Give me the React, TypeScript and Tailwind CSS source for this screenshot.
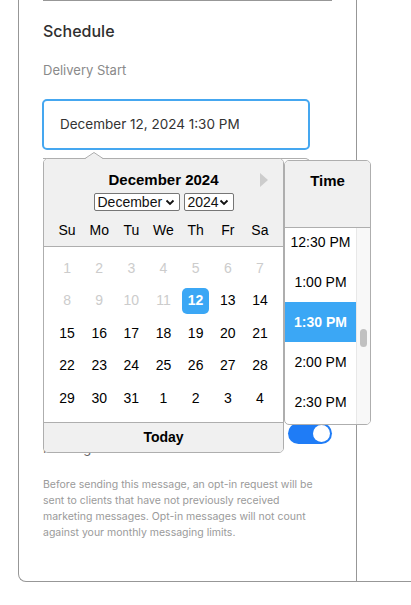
import React from 'react';

const font = { fontFamily: 'Inter, "Noto Sans", sans-serif' };
const calFont = { fontFamily: '"Liberation Sans", Arial, sans-serif' };

const dayNames = ['Su', 'Mo', 'Tu', 'We', 'Th', 'Fr', 'Sa'];

type Day = { n: number; muted?: boolean; selected?: boolean };

const weeks: Day[][] = [
  [1, 2, 3, 4, 5, 6, 7].map((n) => ({ n, muted: true })),
  [
    { n: 8, muted: true },
    { n: 9, muted: true },
    { n: 10, muted: true },
    { n: 11, muted: true },
    { n: 12, selected: true },
    { n: 13 },
    { n: 14 },
  ],
  [15, 16, 17, 18, 19, 20, 21].map((n) => ({ n })),
  [22, 23, 24, 25, 26, 27, 28].map((n) => ({ n })),
  [29, 30, 31, 1, 2, 3, 4].map((n) => ({ n })),
];

const times = ['12:30 PM', '1:00 PM', '1:30 PM', '2:00 PM', '2:30 PM', '3:00 PM'];

function Chevron() {
  return (
    <svg width="10" height="7" viewBox="0 0 10 7" className="shrink-0">
      <path d="M1.5 1.5 L5 5 L8.5 1.5" fill="none" stroke="#111" strokeWidth="1.8" />
    </svg>
  );
}

function FakeSelect({ label, width }: { label: string; width: string }) {
  return (
    <div
      className={`${width} h-[18px] border border-[#767676] rounded-[2px] bg-white flex items-center justify-between pl-[3px] pr-[4px] text-[14px] leading-none text-[#111]`}
    >
      <span>{label}</span>
      <Chevron />
    </div>
  );
}

function DatePanel() {
  return (
    <div className="w-[241px] border border-[#aeaeae] rounded-[5px] bg-white overflow-hidden relative">
      <div className="bg-[#f0f0f0] border-b border-[#aeaeae] pt-[12px] pb-[6px] relative">
        <div className="text-center text-[15px] leading-[18px] font-bold text-[#000]">December 2024</div>
        <svg width="8" height="14" viewBox="0 0 8 14" className="absolute left-[216px] top-[14px]">
          <path d="M0 0 L8 7 L0 14 Z" fill="#ccc" />
        </svg>
        <div className="flex justify-center gap-[4px] mt-[4px]">
          <FakeSelect label="December" width="w-[86px]" />
          <FakeSelect label="2024" width="w-[50px]" />
        </div>
        <div className="grid grid-cols-7 px-[7px] mt-[9px]">
          {dayNames.map((d) => (
            <div key={d} className="text-center text-[14px] leading-[20px] text-[#000]">
              {d}
            </div>
          ))}
        </div>
      </div>
      <div className="h-[175px] px-[7px] pt-[5px]">
        {weeks.map((w, i) => (
          <div key={i} className="grid grid-cols-7 h-[32.5px]">
            {w.map((d, j) => (
              <div key={j} className="flex items-center justify-center">
                {d.selected ? (
                  <div className="w-[27px] h-[26px] rounded-[5px] bg-[#3ba7f5] text-white font-bold text-[14px] flex items-center justify-center">
                    {d.n}
                  </div>
                ) : (
                  <span className={`text-[14px] ${d.muted ? 'text-[#ccc]' : 'text-[#000]'}`}>{d.n}</span>
                )}
              </div>
            ))}
          </div>
        ))}
      </div>
      <div className="h-[30px] bg-[#f0f0f0] border-t border-[#aeaeae] flex items-center justify-center text-[14px] font-bold text-[#000]">
        Today
      </div>
    </div>
  );
}

function TimePanel() {
  return (
    <div className="w-[87px] h-[265px] mt-[2px] border border-[#aeaeae] rounded-[5px] bg-white overflow-hidden flex flex-col">
      <div className="h-[67px] shrink-0 bg-[#f0f0f0] border-b border-[#aeaeae] pt-[11px] text-center text-[15px] leading-[18px] font-bold text-[#000]">
        Time
      </div>
      <div className="flex flex-1 overflow-hidden">
        <div className="w-[71px] overflow-hidden">
          <div className="-mt-[6px]">
            {times.map((t) => (
              <div
                key={t}
                className={`h-[40px] flex items-center justify-center text-[14px] ${
                  t === '1:30 PM' ? 'bg-[#3ba7f5] text-white font-bold' : 'text-[#000]'
                }`}
              >
                {t}
              </div>
            ))}
          </div>
        </div>
        <div className="flex-1 bg-[#f8f8f8] border-l border-[#e8e8e8] pt-[101px] flex justify-center">
          <div className="w-[7px] h-[18px] rounded-full bg-[#c1c1c1]" />
        </div>
      </div>
    </div>
  );
}

export default function App() {
  return (
    <div className="w-[411px] h-[605px] bg-white relative overflow-hidden" style={font}>
      <div className="ml-[18px] w-[393px] h-[582px] border-l border-b border-[#979797] rounded-bl-[8px] flex">
        <div className="w-[338px] h-full border-r border-[#979797] pl-[24px]">
          <div className="w-[289px] h-px bg-[#979797]" />
          <h2 className="mt-[18px] text-[16px] leading-[24px] font-medium text-[#2f2f2f]">Schedule</h2>
          <div className="mt-[18px] text-[13px] leading-[18px] text-[#8a8a8a]">Delivery Start</div>
          <div className="mt-[20px] -ml-px w-[268px] h-[51px] border-2 border-[#45a7f0] rounded-[5px] flex items-center pl-[16px] text-[13.5px] text-[#333]">
            December 12, 2024 1:30 PM
          </div>
          <div className="mt-[268px] w-[289px] flex justify-between items-start">
            <div className="text-[13px] leading-[20px] text-[#666]">
              Send as Marketing
              <br />
              Messages
            </div>
            <div className="mt-[5px] w-[44px] h-[21px] rounded-full bg-[#1f7cf6] flex items-center justify-end pr-[2px]">
              <div className="w-[17px] h-[17px] rounded-full bg-white" />
            </div>
          </div>
          <p className="mt-[19px] text-[10.5px] leading-[16px] text-[#9a9a9a] whitespace-nowrap">
            Before sending this message, an opt-in request will be
            <br />
            sent to clients that have not previously received
            <br />
            marketing messages. Opt-in messages will not count
            <br />
            against your monthly messaging limits.
          </p>
        </div>
      </div>

      <div className="absolute left-[43px] top-[158px]" style={calFont}>
        <div className="absolute left-0 top-0 w-[267px] h-[6px] border-t border-r border-[#aeaeae] rounded-tr-[5px]" />
        <div className="relative flex items-start">
          <DatePanel />
          <TimePanel />
        </div>
        <svg width="18" height="7" viewBox="0 0 18 7" className="absolute left-[42px] -top-[6px]">
          <path d="M0 7 L9 0 L18 7 Z" fill="#f0f0f0" />
          <path d="M0 6.5 L9 0.5 L18 6.5" fill="none" stroke="#aeaeae" strokeWidth="1" />
        </svg>
      </div>
    </div>
  );
}
